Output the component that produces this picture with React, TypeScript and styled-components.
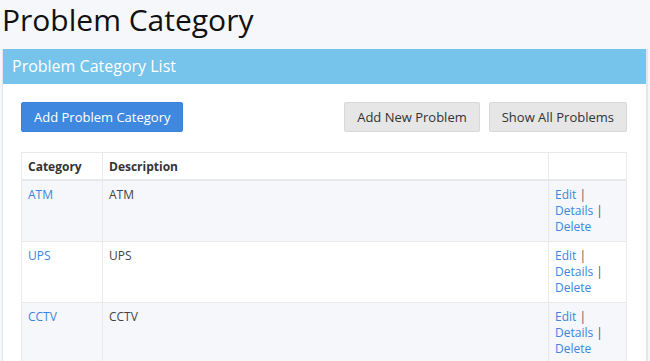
import React from 'react'
import styled, { createGlobalStyle } from 'styled-components';

const GlobalStyle = createGlobalStyle`
    html, body {
        margin: 0;
        padding: 0;
        background: #f5f7fa;
        font-family: "Open Sans", "Liberation Sans", sans-serif;
        color: #333;
    }
`;

const Page = styled.div`
    padding: 0 2px;
`;

const Title = styled.h1`
    font-size: 30px;
    font-weight: normal;
    line-height: 41px;
    margin: -1px 0 9px 0;
    color: #111;
`;

const Panel = styled.div`
    background: #fff;
    border-left: 1px solid #e3e6ea;
    border-right: 2px solid #e3e6ea;
`;

const PanelHeading = styled.div`
    height: 35px;
    line-height: 35px;
    padding: 0 9px;
    background: #76c3ec;
    color: #fff;
    font-size: 16px;
`;

const PanelBody = styled.div`
    padding: 18px 19px 0 18px;
`;

const Toolbar = styled.div`
    display: flex;
    align-items: center;
    gap: 9px;
    margin-bottom: 20px;
`;

const Spacer = styled.div`
    flex: 1;
`;

const Button = styled.button<{ $primary?: boolean }>`
    height: 30px;
    padding: 0 12px;
    font-family: inherit;
    font-size: 13px;
    border-radius: 2px;
    border: 1px solid ${p => p.$primary ? '#3a83dc' : '#d8d8d8'};
    background: ${p => p.$primary ? '#3f88e0' : '#e6e6e6'};
    color: ${p => p.$primary ? '#fff' : '#333'};
    cursor: pointer;
`;

const Table = styled.table`
    width: 606px;
    border-collapse: collapse;
    font-size: 12px;
    border: 1px solid #e8e9eb;
    border-bottom: none;
`;

const HeadCell = styled.th<{ $width?: number }>`
    width: ${p => p.$width ? `${p.$width}px` : 'auto'};
    text-align: left;
    font-weight: bold;
    line-height: 16px;
    padding: 6px 6px 4px;
    border-left: 1px solid #e8e9eb;
    border-bottom: 2px solid #e8e9eb;
    color: #333;
`;

const Row = styled.tr<{ $striped: boolean }>`
    background: ${p => p.$striped ? '#f5f7fa' : '#fff'};
`;

const Cell = styled.td`
    vertical-align: top;
    line-height: 16px;
    padding: 6px 6px 6px;
    border-left: 1px solid #e8e9eb;
    border-top: 1px solid #e8e9eb;
    color: #444;
`;

const Link = styled.a`
    color: #3a86e0;
    text-decoration: none;
`;

const Sep = styled.span`
    color: #555;
`;

const categories = ['ATM', 'UPS', 'CCTV'];

export default function App() {
    return (
        <Page>
            <GlobalStyle />
            <Title>Problem Category</Title>
            <Panel>
                <PanelHeading>Problem Category List</PanelHeading>
                <PanelBody>
                    <Toolbar>
                        <Button $primary>Add Problem Category</Button>
                        <Spacer />
                        <Button>Add New Problem</Button>
                        <Button>Show All Problems</Button>
                    </Toolbar>
                    <Table>
                        <thead>
                            <tr>
                                <HeadCell $width={68}>Category</HeadCell>
                                <HeadCell>Description</HeadCell>
                                <HeadCell $width={65}></HeadCell>
                            </tr>
                        </thead>
                        <tbody>
                            {categories.map((c, i) => (
                                <Row key={c} $striped={i % 2 === 0}>
                                    <Cell><Link href="#">{c}</Link></Cell>
                                    <Cell>{c}</Cell>
                                    <Cell>
                                        <Link href="#">Edit</Link> <Sep>|</Sep><br />
                                        <Link href="#">Details</Link> <Sep>|</Sep><br />
                                        <Link href="#">Delete</Link>
                                    </Cell>
                                </Row>
                            ))}
                        </tbody>
                    </Table>
                </PanelBody>
            </Panel>
        </Page>
    )
}
